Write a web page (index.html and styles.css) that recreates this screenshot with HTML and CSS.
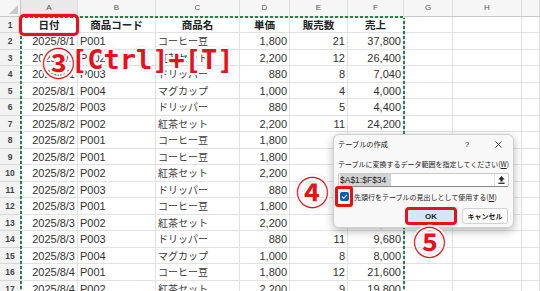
FILE: index.html
```html
<!DOCTYPE html>
<html lang="ja">
<head>
    <meta charset="UTF-8">
    <title>テーブルの作成</title>
    <link rel="stylesheet" href="styles.css">
</head>
<body>
    <div class="sheet">
        <div class="row colhead">
            <div class="corner"></div>
            <div class="sel">A</div><div>B</div><div>C</div><div>D</div><div>E</div><div>F</div><div>G</div><div>H</div><div></div>
        </div>
        <div class="row">
            <div class="rh">1</div>
            <div class="c hd">日付</div><div class="c hd">商品コード</div><div class="c hd">商品名</div><div class="c hd">単価</div><div class="c hd">販売数</div><div class="c hd">売上</div>
            <div class="c"></div><div class="c"></div><div class="c"></div>
        </div>
        <div class="row">
            <div class="rh">2</div>
            <div class="c num">2025/8/1</div><div class="c">P001</div><div class="c jp">コーヒー豆</div><div class="c num">1,800</div><div class="c num">21</div><div class="c num">37,800</div>
            <div class="c"></div><div class="c"></div><div class="c"></div>
        </div>
        <div class="row">
            <div class="rh">3</div>
            <div class="c num">2025/8/1</div><div class="c">P002</div><div class="c jp">紅茶セット</div><div class="c num">2,200</div><div class="c num">12</div><div class="c num">26,400</div>
            <div class="c"></div><div class="c"></div><div class="c"></div>
        </div>
        <div class="row">
            <div class="rh">4</div>
            <div class="c num">2025/8/1</div><div class="c">P003</div><div class="c jp">ドリッパー</div><div class="c num">880</div><div class="c num">8</div><div class="c num">7,040</div>
            <div class="c"></div><div class="c"></div><div class="c"></div>
        </div>
        <div class="row">
            <div class="rh">5</div>
            <div class="c num">2025/8/1</div><div class="c">P004</div><div class="c jp">マグカップ</div><div class="c num">1,000</div><div class="c num">4</div><div class="c num">4,000</div>
            <div class="c"></div><div class="c"></div><div class="c"></div>
        </div>
        <div class="row">
            <div class="rh">6</div>
            <div class="c num">2025/8/2</div><div class="c">P003</div><div class="c jp">ドリッパー</div><div class="c num">880</div><div class="c num">5</div><div class="c num">4,400</div>
            <div class="c"></div><div class="c"></div><div class="c"></div>
        </div>
        <div class="row">
            <div class="rh">7</div>
            <div class="c num">2025/8/2</div><div class="c">P002</div><div class="c jp">紅茶セット</div><div class="c num">2,200</div><div class="c num">11</div><div class="c num">24,200</div>
            <div class="c"></div><div class="c"></div><div class="c"></div>
        </div>
        <div class="row">
            <div class="rh">8</div>
            <div class="c num">2025/8/2</div><div class="c">P001</div><div class="c jp">コーヒー豆</div><div class="c num">1,800</div><div class="c num">15</div><div class="c num">27,000</div>
            <div class="c"></div><div class="c"></div><div class="c"></div>
        </div>
        <div class="row">
            <div class="rh">9</div>
            <div class="c num">2025/8/2</div><div class="c">P001</div><div class="c jp">コーヒー豆</div><div class="c num">1,800</div><div class="c num">9</div><div class="c num">16,200</div>
            <div class="c"></div><div class="c"></div><div class="c"></div>
        </div>
        <div class="row">
            <div class="rh">10</div>
            <div class="c num">2025/8/2</div><div class="c">P002</div><div class="c jp">紅茶セット</div><div class="c num">2,200</div><div class="c num">6</div><div class="c num">13,200</div>
            <div class="c"></div><div class="c"></div><div class="c"></div>
        </div>
        <div class="row">
            <div class="rh">11</div>
            <div class="c num">2025/8/2</div><div class="c">P003</div><div class="c jp">ドリッパー</div><div class="c num">880</div><div class="c num">14</div><div class="c num">12,320</div>
            <div class="c"></div><div class="c"></div><div class="c"></div>
        </div>
        <div class="row">
            <div class="rh">12</div>
            <div class="c num">2025/8/3</div><div class="c">P001</div><div class="c jp">コーヒー豆</div><div class="c num">1,800</div><div class="c num">10</div><div class="c num">18,000</div>
            <div class="c"></div><div class="c"></div><div class="c"></div>
        </div>
        <div class="row">
            <div class="rh">13</div>
            <div class="c num">2025/8/3</div><div class="c">P002</div><div class="c jp">紅茶セット</div><div class="c num">2,200</div><div class="c num">7</div><div class="c num">15,400</div>
            <div class="c"></div><div class="c"></div><div class="c"></div>
        </div>
        <div class="row">
            <div class="rh">14</div>
            <div class="c num">2025/8/3</div><div class="c">P003</div><div class="c jp">ドリッパー</div><div class="c num">880</div><div class="c num">11</div><div class="c num">9,680</div>
            <div class="c"></div><div class="c"></div><div class="c"></div>
        </div>
        <div class="row">
            <div class="rh">15</div>
            <div class="c num">2025/8/3</div><div class="c">P004</div><div class="c jp">マグカップ</div><div class="c num">1,000</div><div class="c num">8</div><div class="c num">8,000</div>
            <div class="c"></div><div class="c"></div><div class="c"></div>
        </div>
        <div class="row">
            <div class="rh">16</div>
            <div class="c num">2025/8/4</div><div class="c">P001</div><div class="c jp">コーヒー豆</div><div class="c num">1,800</div><div class="c num">12</div><div class="c num">21,600</div>
            <div class="c"></div><div class="c"></div><div class="c"></div>
        </div>
        <div class="row">
            <div class="rh">17</div>
            <div class="c num">2025/8/4</div><div class="c">P002</div><div class="c jp">紅茶セット</div><div class="c num">2,200</div><div class="c num">9</div><div class="c num">19,800</div>
            <div class="c"></div><div class="c"></div><div class="c"></div>
        </div>

        <!-- copy range marquee around A1:F34 -->
        <div class="ants"></div>

        <!-- annotations -->
        <div class="mark-a1"></div>
        <span class="badge b3">③</span>
        <span class="keys">[Ctrl]+[T]</span>

        <div class="dialog">
            <div class="dlg-title">
                <span class="dlg-name">テーブルの作成</span>
                <span class="help">?</span>
                <span class="close">
                    <svg width="7" height="7" viewBox="0 0 7 7"><path d="M0.5 0.5L6.5 6.5M6.5 0.5L0.5 6.5" stroke="#333" stroke-width="0.9" fill="none"/></svg>
                </span>
            </div>
            <div class="dlg-label">テーブルに変換するデータ範囲を指定してください(<u>W</u>)</div>
            <div class="range">
                <span class="range-text">$A$1:$F$34</span>
                <span class="range-btn">
                    <svg width="7" height="8" viewBox="0 0 7 8"><path d="M3.5 0L0.3 3.6H2.4V5.6H4.6V3.6H6.7Z" fill="#222"/><rect x="0.4" y="6.6" width="6.2" height="1.3" fill="#222"/></svg>
                </span>
            </div>
            <div class="check-row">
                <span class="mark-check"><span class="checkbox">
                    <svg width="9" height="9" viewBox="0 0 9 9"><path d="M2 4.7L3.7 6.3L7 2.8" stroke="#fff" stroke-width="1.1" fill="none"/></svg>
                </span></span>
                <span>先頭行をテーブルの見出しとして使用する(<u>M</u>)</span>
            </div>
            <div class="buttons">
                <span class="btn ok">OK</span>
                <span class="btn cancel">キャンセル</span>
            </div>
        </div>

        <span class="badge b4">④</span>
        <span class="badge b5">⑤</span>
    </div>
</body>
</html>
```

FILE: styles.css
```css
body {
    margin: 0;
    background: #fff;
    font-family: "Liberation Sans", "Noto Sans CJK JP", sans-serif;
    color: #333;
}
.sheet {
    position: relative;
    width: 540px;
    height: 291px;
    overflow: hidden;
}
.row {
    display: grid;
    grid-template-columns: 21px 57px 78px 84px 50px 58px 56px 49px 69px 18px;
    height: 16.5px;
}
.row > div {
    box-sizing: border-box;
    border-right: 1px solid #e2e2e2;
    border-bottom: 1px solid #e2e2e2;
    white-space: nowrap;
    overflow: hidden;
}
.c {
    padding: 1px 2px 0;
    font-size: 11px;
    line-height: 14.5px;
}
.num {
    text-align: right;
}
.row .jp {
    font-family: "Noto Sans CJK JP", sans-serif;
    font-size: 10px;
    color: #3a3a3a;
}
.row .hd {
    font-family: "Noto Sans CJK JP", sans-serif;
    font-size: 10.5px;
    font-weight: bold;
    color: #222;
    text-align: center;
}

/* headers */
.colhead > div {
    background: #f6f6f6;
    border-right-color: #dcdcdc;
    border-bottom-color: #c8c8c8;
    font-size: 8px;
    line-height: 16px;
    color: #555;
    text-align: center;
}
.colhead > .sel {
    background: #e9e9e9;
}
.colhead > .corner {
    position: relative;
    border-right-color: #c8c8c8;
}
.corner::after {
    content: "";
    position: absolute;
    right: 2px;
    bottom: 2px;
    border-left: 9px solid transparent;
    border-bottom: 9px solid #c9c9c9;
}
.row > .rh {
    background: #f2f2f2;
    border-right-color: #c8c8c8;
    border-bottom-color: #d8d8d8;
    font-size: 8.5px;
    font-weight: bold;
    line-height: 16px;
    color: #444;
    text-align: center;
}

.ants {
    position: absolute;
    left: 20px;
    top: 16px;
    width: 385px;
    height: 300px;
    background:
        repeating-linear-gradient(90deg, #2f7d4f 0 3px, #cfe3d6 3px 5px) left top / 100% 2px no-repeat,
        repeating-linear-gradient(180deg, #2f7d4f 0 3px, #cfe3d6 3px 5px) left top / 2px 100% no-repeat,
        repeating-linear-gradient(180deg, #2f7d4f 0 3px, #cfe3d6 3px 5px) right top / 2px 100% no-repeat;
}

/* red annotations */
.mark-a1 {
    position: absolute;
    left: 19px;
    top: 14px;
    width: 60px;
    height: 22px;
    box-sizing: border-box;
    border: 3.5px solid #e8101a;
    border-radius: 5px;
    box-shadow: 0 0 2px rgba(0,0,0,0.35);
}
.badge {
    position: absolute;
    width: 33px;
    font-family: "Noto Sans CJK JP", sans-serif;
    font-size: 33px;
    font-weight: bold;
    line-height: 33px;
    text-align: center;
    color: #e8101a;
    text-shadow: -2px 0 #fff, 2px 0 #fff, 0 -2px #fff, 0 2px #fff,
        -1.5px -1.5px #fff, 1.5px -1.5px #fff, -1.5px 1.5px #fff, 1.5px 1.5px #fff,
        0 0 4px rgba(0,0,0,0.45);
}
.b3 { left: 42px; top: 46px; }
.b4 { left: 296px; top: 175px; }
.b5 { left: 413px; top: 225px; }
.keys {
    position: absolute;
    left: 71px;
    top: 45px;
    font-family: "DejaVu Sans Mono", monospace;
    font-size: 27px;
    font-weight: bold;
    line-height: 30px;
    color: #e8101a;
    text-shadow: -2px 0 #fff, 2px 0 #fff, 0 -2px #fff, 0 2px #fff,
        -1.5px -1.5px #fff, 1.5px -1.5px #fff, -1.5px 1.5px #fff, 1.5px 1.5px #fff,
        0 0 4px rgba(0,0,0,0.45);
}

/* dialog */
.dialog {
    position: absolute;
    left: 333px;
    top: 134px;
    width: 181px;
    height: 94px;
    box-sizing: border-box;
    padding: 0 4px 0 4px;
    background: #f8f8f8;
    border: 1px solid #cfcfcf;
    border-radius: 6px;
    box-shadow: 0 3px 10px rgba(0,0,0,0.28);
    font-family: "Noto Sans CJK JP", sans-serif;
    font-size: 7px;
    color: #222;
}
.dlg-title {
    display: flex;
    align-items: center;
    height: 18px;
}
.dlg-name {
    flex: 1;
    font-size: 7.2px;
}
.help {
    width: 10px;
    margin-right: 23px;
    font-family: "Liberation Sans", sans-serif;
    font-size: 8px;
    text-align: center;
}
.close {
    display: flex;
    margin-right: 7px;
}
.dlg-label {
    margin-top: 6px;
    line-height: 10px;
    white-space: nowrap;
}
.range {
    display: flex;
    align-items: center;
    height: 14px;
    margin-top: 4px;
    box-sizing: border-box;
    border: 1px solid #c9c9c9;
    border-bottom-color: #8a8a8a;
    border-radius: 2px;
    background: #fff;
}
.range-text {
    flex: 1;
    padding-left: 1px;
    font-family: "Liberation Sans", sans-serif;
    font-size: 8.5px;
    line-height: 12px;
    background: linear-gradient(#d3d3d3, #d3d3d3) 1px 0 / 51px 100% no-repeat;
}
.range-btn {
    display: flex;
    align-items: center;
    justify-content: center;
    width: 13px;
    height: 12px;
    border-left: 1px solid #dedede;
}
.check-row {
    display: flex;
    align-items: center;
    height: 21px;
    margin-top: -1px;
    white-space: nowrap;
}
.mark-check {
    display: flex;
    align-items: center;
    justify-content: center;
    width: 18px;
    height: 21px;
    margin-left: -3px;
    margin-right: 1px;
    box-sizing: border-box;
    border: 3px solid #e8101a;
    border-radius: 3px;
}
.checkbox {
    display: flex;
    width: 9px;
    height: 9px;
    border-radius: 2px;
    background: #0f5fae;
}
.buttons {
    display: flex;
    justify-content: flex-end;
    align-items: center;
    gap: 5px;
    height: 18px;
    padding-right: 1px;
}
.btn {
    display: flex;
    align-items: center;
    justify-content: center;
    box-sizing: border-box;
    border-radius: 3px;
}
.ok {
    width: 52px;
    height: 18px;
    border: 3px solid #e8101a;
    border-radius: 4px;
    background: #d3e7f7;
    font-family: "Liberation Sans", sans-serif;
    font-size: 8px;
    font-weight: bold;
}
.cancel {
    width: 46px;
    height: 16px;
    border: 1px solid #d2d2d2;
    background: #fdfdfd;
    font-weight: bold;
}
```
